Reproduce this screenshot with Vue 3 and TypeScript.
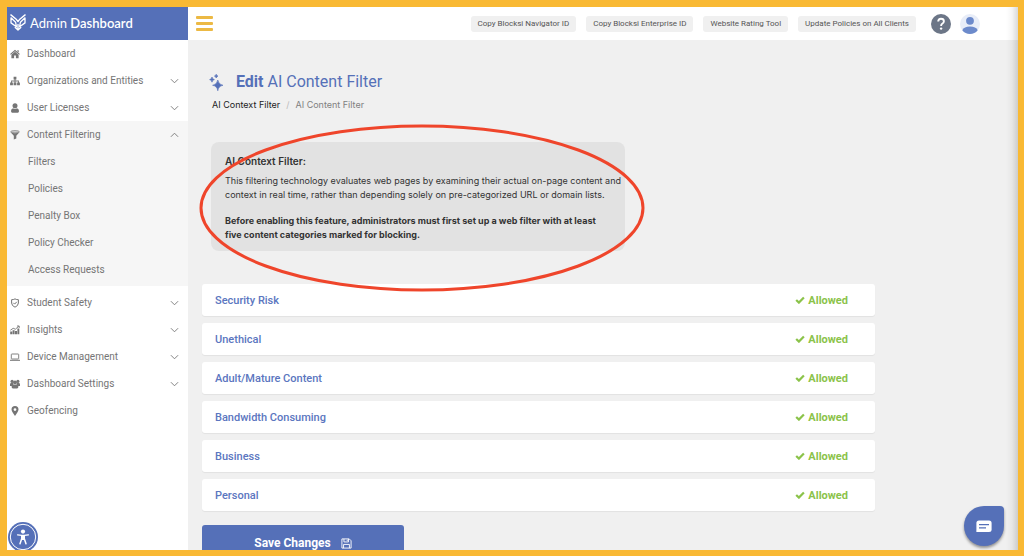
<script setup lang="ts">
import { ref } from 'vue'

interface NavItem {
  label: string
  icon: string
  expandable?: boolean
  children?: string[]
}

const nav: NavItem[] = [
  { label: 'Dashboard', icon: 'home' },
  { label: 'Organizations and Entities', icon: 'sitemap', expandable: true },
  { label: 'User Licenses', icon: 'user', expandable: true },
  {
    label: 'Content Filtering',
    icon: 'funnel',
    expandable: true,
    children: ['Filters', 'Policies', 'Penalty Box', 'Policy Checker', 'Access Requests'],
  },
  { label: 'Student Safety', icon: 'shield', expandable: true },
  { label: 'Insights', icon: 'chart', expandable: true },
  { label: 'Device Management', icon: 'laptop', expandable: true },
  { label: 'Dashboard Settings', icon: 'users', expandable: true },
  { label: 'Geofencing', icon: 'pin' },
]

const actions: string[] = [
  'Copy Blocksi Navigator ID',
  'Copy Blocksi Enterprise ID',
  'Website Rating Tool',
  'Update Policies on All Clients',
]

const categories: string[] = [
  'Security Risk',
  'Unethical',
  'Adult/Mature Content',
  'Bandwidth Consuming',
  'Business',
  'Personal',
]

const open = ref<string>('Content Filtering')

function toggle(item: NavItem): void {
  if (item.expandable) open.value = open.value === item.label ? '' : item.label
}
</script>

<template>
  <div class="frame">
    <aside class="sidebar">
      <div class="brand">
        <svg class="brand-logo" viewBox="0 0 16 17" aria-hidden="true">
          <g fill="none" stroke="#fff" stroke-linejoin="round" stroke-linecap="round">
            <path d="M.9 .9 L6.2 5.2 L8 7.6 L9.8 5.2 L15.1 .9" stroke-width="1.4" />
            <path d="M1 3.8 L5.6 8.2 L6.4 12.8 L1 8.9 Z" stroke-width="1.3" />
            <path d="M15 3.8 L10.4 8.2 L9.6 12.8 L15 8.9 Z" stroke-width="1.3" />
            <path d="M5.2 13.6 L8 16.1 L10.8 13.6 M8 10.4 V15.6" stroke-width="1.4" />
          </g>
        </svg>
        <span class="brand-name">Admin <b>Dashboard</b></span>
      </div>
      <nav>
        <div v-for="item in nav" :key="item.label" class="group" :class="{ open: item.children && open === item.label }">
          <button type="button" class="nav-item" @click="toggle(item)">
            <svg class="nav-icon" viewBox="0 0 10 10" aria-hidden="true">
              <g v-if="item.icon === 'home'" fill="currentColor">
                <path d="M5 .7 L9.9 4.9 L9.1 5.8 L5 2.3 L.9 5.8 L.1 4.9 Z M7.3 1.2 H8.7 V3.4 L7.3 2.2 Z" />
                <path d="M5 2.8 L8.6 5.8 V9.2 H5.9 V6.6 H4.1 V9.2 H1.4 V5.8 Z" />
              </g>
              <g v-else-if="item.icon === 'sitemap'" fill="currentColor">
                <path d="M3.6 .8 H6.4 V3.6 H5.5 V4.5 H8.9 V6.4 H9.9 V9.2 H7.1 V6.4 H8 V5.4 H5.5 V6.4 H6.4 V9.2 H3.6 V6.4 H4.5 V5.4 H2 V6.4 H2.9 V9.2 H.1 V6.4 H1.1 V4.5 H4.5 V3.6 H3.6 Z" />
              </g>
              <g v-else-if="item.icon === 'user'" fill="currentColor">
                <circle cx="5" cy="2.8" r="2.5" />
                <path d="M3 5.2 Q5 6.4 7 5.2 Q9 5.8 9 8 Q9 9.7 7.8 9.7 H2.2 Q1 9.7 1 8 Q1 5.8 3 5.2 Z" />
              </g>
              <g v-else-if="item.icon === 'funnel'">
                <path fill="currentColor" d="M.6 2.3 Q5 4 9.4 2.3 L6.3 5.8 V8.4 L3.8 9.6 V5.8 Z" />
                <ellipse cx="5" cy="1.8" rx="4.3" ry="1.1" fill="#ddd" stroke="currentColor" stroke-width=".8" />
              </g>
              <g v-else-if="item.icon === 'shield'" fill="none" stroke="currentColor" stroke-width="1">
                <path d="M5 .9 Q6.8 1.8 8.4 1.7 V5 Q8.2 7.9 5 9.2 Q1.8 7.9 1.6 5 V1.7 Q3.2 1.8 5 .9 Z" />
                <path d="M3.3 4.8 L4.6 6.1 L6.8 3.8" />
              </g>
              <g v-else-if="item.icon === 'chart'">
                <path fill="currentColor" d="M.2 6.5 H2.2 V9.3 H.2 Z M2.6 5.3 H4.6 V9.3 H2.6 Z M5 5.9 H7 V9.3 H5 Z M7.4 3.5 H9.3 V9.3 H7.4 Z" />
                <path d="M.4 5.2 L3.2 3.3 L5.4 4.2 L8.8 1.2 M7 1 H9.2 V3" fill="none" stroke="currentColor" stroke-width=".9" />
              </g>
              <g v-else-if="item.icon === 'laptop'" fill="none" stroke="currentColor">
                <rect x="1.3" y="2" width="7.4" height="5" rx=".6" stroke-width=".9" />
                <path d="M0 8.3 H10" stroke-width="1" />
              </g>
              <g v-else-if="item.icon === 'users'" fill="currentColor">
                <circle cx="2.1" cy="2.4" r="1.6" />
                <circle cx="7.9" cy="2.4" r="1.6" />
                <path d="M0 6.9 V5.3 Q0 4 1.3 4 H3 V6.9 Z M10 6.9 V5.3 Q10 4 8.7 4 H7 V6.9 Z" />
                <circle cx="5" cy="3.6" r="2" />
                <path d="M3.3 5.3 Q5 6.4 6.7 5.3 Q8.4 5.8 8.4 7.8 Q8.4 9.4 7 9.4 H3 Q1.6 9.4 1.6 7.8 Q1.6 5.8 3.3 5.3 Z" />
              </g>
              <path v-else fill="currentColor" fill-rule="evenodd" d="M5 .1 A3.5 3.5 0 0 1 8.5 3.6 Q8.5 5.4 5 10 Q1.5 5.4 1.5 3.6 A3.5 3.5 0 0 1 5 .1 Z M5 2.2 A1.4 1.4 0 1 0 5 5 A1.4 1.4 0 1 0 5 2.2 Z" />
            </svg>
            <span class="nav-label">{{ item.label }}</span>
            <svg v-if="item.expandable" class="chevron" :class="{ up: item.children && open === item.label }" viewBox="0 0 10 6" aria-hidden="true">
              <path d="M1 1 L5 5 L9 1" fill="none" stroke="currentColor" stroke-width="1" />
            </svg>
          </button>
          <template v-if="item.children && open === item.label">
            <a v-for="child in item.children" :key="child" href="#" class="nav-child">{{ child }}</a>
          </template>
        </div>
      </nav>
      <button type="button" class="access" aria-label="Accessibility options">
        <svg viewBox="0 0 30 30" aria-hidden="true">
          <circle cx="15" cy="15" r="15" fill="#5570b8" />
          <circle cx="15" cy="15" r="12.7" fill="none" stroke="#fff" stroke-width="1" />
          <circle cx="15" cy="9.6" r="2.1" fill="#fff" />
          <path d="M9.6 12.9 L13.7 13.4 H16.3 L20.4 12.9" fill="none" stroke="#fff" stroke-width="1.4" stroke-linecap="round" />
          <path d="M16.4 17 L18 21.8 M13.6 17 L12 21.8" fill="none" stroke="#fff" stroke-width="1.5" stroke-linecap="round" />
          <path d="M13 13.2 H17 V18 H13 Z" fill="#fff" />
        </svg>
      </button>
    </aside>

    <div class="page">
      <header class="topbar">
        <button type="button" class="burger" aria-label="Toggle menu"><i></i><i></i><i></i></button>
        <div class="actions">
          <button v-for="a in actions" :key="a" type="button" class="chip">{{ a }}</button>
        </div>
        <button type="button" class="round" aria-label="Help">
          <svg viewBox="0 0 20 20" aria-hidden="true">
            <circle cx="10" cy="10" r="10" fill="#6c7687" />
            <path d="M7.2 7.6 Q7.2 4.8 10 4.8 Q12.9 4.8 12.9 7.3 Q12.9 8.8 11.2 9.8 Q10.1 10.5 10.1 12" fill="none" stroke="#fff" stroke-width="1.9" />
            <circle cx="10.1" cy="14.6" r="1.2" fill="#fff" />
          </svg>
        </button>
        <button type="button" class="round" aria-label="Account">
          <svg viewBox="0 0 20 20" aria-hidden="true">
            <circle cx="10" cy="10" r="10" fill="#e8edf8" />
            <circle cx="10" cy="6.8" r="3.9" fill="#6c8acb" />
            <path d="M2.3 16.2 Q4 12.6 10 12.6 Q16 12.6 17.7 16.2 Q14.8 20 10 20 Q5.2 20 2.3 16.2 Z" fill="#6c8acb" />
          </svg>
        </button>
      </header>

      <main class="content">
        <h1 class="title">
          <svg class="sparkles" viewBox="0 0 16 20" aria-hidden="true">
            <g fill="#5570b8" stroke="#5570b8" stroke-width=".6" stroke-linejoin="round">
              <path d="M8.8 8 Q9.5 12.6 14 13.3 Q9.5 14 8.8 18.8 Q8.1 14 3.6 13.3 Q8.1 12.6 8.8 8 Z" />
              <path d="M3 5 Q3.3 7.2 5.4 7.6 Q3.3 8 3 10.2 Q2.7 8 .6 7.6 Q2.7 7.2 3 5 Z" />
              <path d="M7.2 2.2 Q7.5 3.8 9 4.1 Q7.5 4.4 7.2 6 Q6.9 4.4 5.4 4.1 Q6.9 3.8 7.2 2.2 Z" />
            </g>
          </svg>
          <span><b>Edit</b> AI Content Filter</span>
        </h1>
        <nav class="crumbs" aria-label="Breadcrumb">
          <a href="#">AI Context Filter</a>
          <span class="slash">/</span>
          <span class="here">AI Content Filter</span>
        </nav>

        <section class="info">
          <h2>AI Context Filter:</h2>
          <p>
            This filtering technology evaluates web pages by examining their actual on-page content and<br />
            context in real time, rather than depending solely on pre-categorized URL or domain lists.
          </p>
          <p class="strong">
            Before enabling this feature, administrators must first set up a web filter with at least<br />
            five content categories marked for blocking.
          </p>
          <svg class="ring" viewBox="0 0 446 168" preserveAspectRatio="none" aria-hidden="true">
            <ellipse cx="223" cy="84" rx="221" ry="82" fill="none" stroke="#ef452b" stroke-width="3" />
          </svg>
        </section>

        <ul class="rows">
          <li v-for="c in categories" :key="c" class="row">
            <span class="cat">{{ c }}</span>
            <span class="state">
              <svg viewBox="0 0 10 8" aria-hidden="true"><path d="M1.2 4 L3.9 6.6 L8.9 1.5" fill="none" stroke="#8bc34a" stroke-width="2.2" /></svg>
              Allowed
            </span>
          </li>
        </ul>

        <button type="button" class="save">
          Save Changes
          <svg viewBox="0 0 12 12" aria-hidden="true">
            <path d="M1 1 H9 L11 3 V11 H1 Z M3.2 1 V4.3 H8.2 V1 M2.8 11 V7 H9.2 V11 M6.8 1.8 V3.4" fill="none" stroke="#fff" stroke-width="1" />
          </svg>
        </button>
      </main>
    </div>

    <button type="button" class="chat" aria-label="Open chat">
      <svg viewBox="0 0 16 13" aria-hidden="true">
        <path d="M3 .5 H13 Q15.6 .5 15.6 3 V9.5 Q15.6 12 13 12 H.4 V3 Q.4 .5 3 .5 Z" fill="#fff" />
        <path d="M3 4.6 H13 M3 7.9 H10" stroke="#5570b8" stroke-width="1.1" />
      </svg>
    </button>
  </div>
</template>

<style>
body {
  margin: 0;
}
</style>

<style scoped>
* {
  box-sizing: border-box;
}
button {
  margin: 0;
  padding: 0;
  border: 0;
  background: none;
  font: inherit;
  color: inherit;
  cursor: pointer;
}
a {
  color: inherit;
  text-decoration: none;
}
svg {
  display: block;
  flex: none;
}
.frame {
  position: relative;
  display: flex;
  height: 100vh;
  overflow: hidden;
  border: solid #f9b934;
  border-width: 7px 6px 6px 7px;
  background: #f0f0f0;
  font-family: Roboto, sans-serif;
}
.frame::after {
  content: '';
  position: absolute;
  inset: 0 0 0 auto;
  width: 12px;
  background: linear-gradient(to right, rgba(0, 0, 0, 0), rgba(0, 0, 0, 0.04) 50%, rgba(0, 0, 0, 0.15));
  pointer-events: none;
}
.sidebar {
  position: relative;
  flex: none;
  width: 181px;
  background: #fff;
}
.brand {
  display: flex;
  align-items: center;
  gap: 4px;
  height: 33px;
  padding: 0 0 2px 3px;
  background: #5570b8;
  color: #fff;
  font-family: Lato, sans-serif;
  font-size: 13px;
}
.brand-logo {
  width: 16px;
  height: 17px;
}
.brand-name b {
  font-weight: 600;
}
.nav-item {
  display: flex;
  align-items: center;
  width: 100%;
  height: 27px;
  padding: 0 9px 0 3px;
  text-align: left;
}
.nav-item,
.nav-child {
  color: #757575;
  font-size: 10px;
}
.nav-icon {
  width: 10px;
  height: 10px;
}
.nav-label {
  flex: 1;
  margin-left: 7px;
}
.chevron {
  width: 9px;
  height: 6px;
}
.chevron.up {
  transform: rotate(180deg);
}
.nav-child {
  display: block;
  padding-left: 21px;
  line-height: 27px;
}
.open {
  margin-bottom: 3px;
  padding-bottom: 3px;
  background: #f6f6f6;
}
.access {
  position: absolute;
  left: 1px;
  bottom: -2px;
  width: 30px;
  height: 30px;
}
.page {
  flex: 1;
  min-width: 0;
}
.topbar {
  display: flex;
  align-items: center;
  height: 33px;
  padding: 0 38px 0 8px;
  background: #fff;
}
.burger {
  display: grid;
  gap: 3px;
  width: 17px;
}
.burger i {
  height: 3px;
  border-radius: 1px;
  background: #ecb944;
}
.actions {
  display: flex;
  gap: 10px;
  margin: 0 15px 0 auto;
}
.chip {
  height: 16px;
  padding: 0 7px;
  border-radius: 3px;
  background: #f0f0f0;
  color: #555;
  font-size: 8px;
}
.round {
  width: 20px;
  height: 20px;
}
.round + .round {
  margin-left: 9px;
}
.content {
  padding: 30px 143px 0 14px;
}
.title {
  display: flex;
  align-items: center;
  gap: 11px;
  margin: 0 0 0 7px;
  color: #5570b8;
  font-size: 16px;
  font-weight: 400;
  line-height: 24px;
}
.sparkles {
  width: 16px;
  height: 20px;
}
.crumbs {
  display: flex;
  gap: 6px;
  margin: 4px 0 0 10px;
  color: #1c1c1c;
  font: 9px/14px Inter, sans-serif;
}
.slash {
  color: #bbb;
}
.here {
  color: #808080;
}
.info {
  position: relative;
  width: fit-content;
  margin: 30px 0 0 9px;
  padding: 12px 4px 9px 14px;
  border-radius: 8px;
  background: #e2e2e2;
  color: #333;
  font: 9px/14px Inter, sans-serif;
}
.info h2 {
  margin: 0 0 6px;
  font-size: 10px;
  font-weight: 600;
  line-height: 14px;
}
.info p {
  margin: 0;
  white-space: nowrap;
}
.info .strong {
  margin-top: 12px;
  font-weight: 700;
}
.ring {
  position: absolute;
  left: -12px;
  top: -18px;
  width: calc(100% + 32px);
  height: calc(100% + 59px);
}
.rows {
  display: grid;
  gap: 7px;
  margin: 33px 0 0;
  padding: 0;
  list-style: none;
  font-size: 11px;
}
.row {
  display: flex;
  align-items: center;
  justify-content: space-between;
  height: 32px;
  padding: 0 27px 0 13px;
  border-radius: 3px;
  background: #fff;
  box-shadow: 0 1px 1px rgba(0, 0, 0, 0.06);
}
.cat {
  color: #5b76c0;
  font-weight: 500;
}
.state {
  display: flex;
  align-items: center;
  gap: 3px;
  color: #8bc34a;
  font-weight: 700;
}
.state svg {
  width: 10px;
  height: 8px;
}
.save {
  display: flex;
  align-items: center;
  justify-content: center;
  gap: 10px;
  width: 202px;
  height: 36px;
  margin-top: 14px;
  border-radius: 3px;
  background: #5570b8;
  color: #fff;
  font-size: 12px;
  font-weight: 700;
}
.save svg {
  width: 11px;
  height: 11px;
}
.chat {
  position: absolute;
  right: 14px;
  bottom: 4px;
  display: grid;
  place-items: center;
  width: 40px;
  height: 40px;
  border-radius: 50% 4px 50% 50%;
  background: #5570b8;
  box-shadow: 0 2px 3px rgba(0, 0, 0, 0.4);
}
.chat svg {
  width: 16px;
  height: 13px;
}
</style>
